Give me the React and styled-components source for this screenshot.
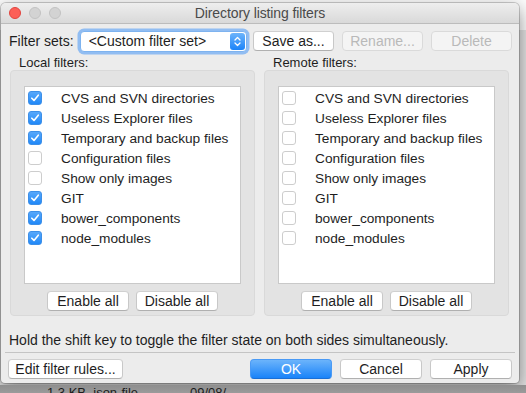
import React from "react";
import styled, { createGlobalStyle, css } from "styled-components";

const GlobalStyle = createGlobalStyle`
  html, body {
    margin: 0;
    padding: 0;
    background: #dcdcdc;
  }
  body {
    font-family: "Liberation Sans", Arial, sans-serif;
    -webkit-font-smoothing: antialiased;
  }
`;

const Page = styled.div`
  width: 526px;
  height: 393px;
  overflow: hidden;
  display: flex;
  flex-direction: column;
  background: linear-gradient(to bottom, #fbfbfb 0, #fbfbfb 30px, #e2e2e2 30px);
  padding: 3px 0 0 1px;
  box-sizing: border-box;
`;

const Window = styled.div`
  width: 518px;
  height: 380px;
  flex-shrink: 0;
  display: flex;
  flex-direction: column;
  background: #ececec;
  border-radius: 5px 5px 4px 4px;
  box-shadow: 0 0 0 1px rgba(0, 0, 0, 0.18), 0 6px 18px rgba(0, 0, 0, 0.45);
  overflow: hidden;
`;

const TitleBar = styled.div`
  height: 20px;
  display: grid;
  grid-template-columns: 1fr auto 1fr;
  align-items: center;
  background: linear-gradient(to bottom, #eeeeee, #d9d9d9);
  border-bottom: 1px solid #bcbcbc;
`;

const Lights = styled.div`
  display: flex;
  gap: 8px;
  padding-left: 8px;
`;

const Light = styled.span`
  width: 12px;
  height: 12px;
  border-radius: 50%;
  box-sizing: border-box;
  background: ${(p) => (p.$red ? "#fc5f57" : "#d3d3d3")};
  border: 1px solid ${(p) => (p.$red ? "#e0443e" : "#c2c2c2")};
`;

const Title = styled.div`
  font-size: 14px;
  color: #4a4a4a;
  letter-spacing: -0.1px;
`;

const Body = styled.div`
  flex: 1;
  display: flex;
  flex-direction: column;
  padding: 0 7px 0 7px;
`;

const Toolbar = styled.div`
  display: flex;
  align-items: center;
  margin-top: 5px;
  height: 24px;
`;

const Label = styled.span`
  font-size: 14px;
  color: #1e1e1e;
  width: 71px;
  padding-left: 1px;
  white-space: nowrap;
`;

const Select = styled.div`
  width: 168px;
  height: 21px;
  box-sizing: border-box;
  display: flex;
  align-items: center;
  justify-content: space-between;
  background: #fff;
  border: 1px solid #7eb3ef;
  border-radius: 4px;
  box-shadow: 0 0 0 2.5px rgba(97, 164, 246, 0.65);
  padding: 0 1px 0 8px;
  font-size: 14px;
  color: #1e1e1e;
  margin-right: 6px;
`;

const Stepper = styled.span`
  width: 15px;
  height: 17px;
  border-radius: 3px;
  background: linear-gradient(to bottom, #6db4fb, #1a83f9);
  display: flex;
  align-items: center;
  justify-content: center;
`;

const Button = styled.div`
  height: 20px;
  width: ${(p) => p.$w || 81}px;
  box-sizing: border-box;
  display: flex;
  align-items: center;
  justify-content: center;
  font-size: 14px;
  border-radius: 4px;
  color: #1e1e1e;
  background: #fff;
  border: 1px solid #c8c8c8;
  border-top-color: #d0d0d0;
  border-bottom-color: #b0b0b0;
  white-space: nowrap;
  ${(p) =>
    p.$disabled &&
    css`
      color: #b9b9b9;
      background: #f4f4f4;
      border-color: #dadada;
    `}
  ${(p) =>
    p.$primary &&
    css`
      color: #fff;
      background: linear-gradient(to bottom, #6cb4fb, #1a83f9);
      border-color: #4a9af5;
      border-bottom-color: #1a6fd6;
    `}
`;

const ButtonGroup = styled.div`
  display: flex;
  gap: ${(p) => p.$gap || 8}px;
  align-items: center;
`;

const Panels = styled.div`
  display: grid;
  grid-template-columns: 245px 245px;
  gap: 9px;
  padding-left: 2px;
  margin-top: 3px;
`;

const Panel = styled.div`
  display: flex;
  flex-direction: column;
`;

const PanelLabel = styled.div`
  font-size: 13px;
  line-height: 14px;
  color: #1e1e1e;
  padding-left: 9px;
  height: 14px;
`;

const GroupBox = styled.div`
  height: 246px;
  box-sizing: border-box;
  display: flex;
  flex-direction: column;
  align-items: center;
  background: #e3e3e3;
  border: 1px solid #d9d9d9;
  border-radius: 4px;
  padding: 15px 13px 0;
`;

const List = styled.div`
  width: 100%;
  height: 198px;
  box-sizing: border-box;
  background: #fff;
  border: 1px solid #c9c9c9;
  padding: 1px 3px;
  margin-bottom: 7px;
`;

const Row = styled.div`
  display: flex;
  align-items: center;
  height: 20px;
  font-size: 13.7px;
  color: #1e1e1e;
  gap: 19px;
  white-space: nowrap;
`;

const Box = styled.span`
  width: 14px;
  height: 14px;
  flex-shrink: 0;
  box-sizing: border-box;
  border-radius: 3px;
  display: flex;
  align-items: center;
  justify-content: center;
  ${(p) =>
    p.$on
      ? css`
          background: linear-gradient(to bottom, #58a8fa, #2189f8);
          border: 1px solid #3d8fe8;
        `
      : css`
          background: #fff;
          border: 1px solid #cdcdcd;
        `}
`;

const Hint = styled.div`
  font-size: 14px;
  color: #1e1e1e;
  margin-top: 17px;
  line-height: 14px;
  padding-left: 1px;
  white-space: nowrap;
`;

const Separator = styled.div`
  height: 1px;
  background: #c4c4c4;
  margin: 5px -3px 0;
`;

const Footer = styled.div`
  display: flex;
  justify-content: space-between;
  align-items: center;
  margin-top: 6px;
`;

const Backdrop = styled.div`
  flex: 1;
  display: flex;
  align-items: flex-start;
  gap: 52px;
  padding: 1px 0 0 47px;
  font-size: 13px;
  line-height: 14px;
  color: #1c1c1c;
  background: linear-gradient(to bottom, #8e8e8e, #a6a6a6);
  margin-left: -1px;
  margin-top: 2px;
`;

const Check = () => (
  <svg width="10" height="10" viewBox="0 0 10 10">
    <path d="M1.8 5.2 L4 7.4 L8.3 2.2" fill="none" stroke="#fff" strokeWidth="1.6" strokeLinecap="round" strokeLinejoin="round" />
  </svg>
);

const Arrows = () => (
  <svg width="9" height="13" viewBox="0 0 9 13">
    <path d="M2 5 L4.5 2.5 L7 5 M2 8 L4.5 10.5 L7 8" fill="none" stroke="#fff" strokeWidth="1.3" strokeLinecap="round" strokeLinejoin="round" />
  </svg>
);

const filters = [
  "CVS and SVN directories",
  "Useless Explorer files",
  "Temporary and backup files",
  "Configuration files",
  "Show only images",
  "GIT",
  "bower_components",
  "node_modules",
];

const localOn = [true, true, true, false, false, true, true, true];

const FilterPanel = ({ title, enabled }) => (
  <Panel>
    <PanelLabel>{title}</PanelLabel>
    <GroupBox>
      <List>
        {filters.map((f, i) => (
          <Row key={f}>
            <Box $on={enabled[i]}>{enabled[i] && <Check />}</Box>
            {f}
          </Row>
        ))}
      </List>
      <ButtonGroup $gap={7}>
        <Button $w={82}>Enable all</Button>
        <Button $w={82}>Disable all</Button>
      </ButtonGroup>
    </GroupBox>
  </Panel>
);

export default function App() {
  return (
    <>
      <GlobalStyle />
      <Page>
        <Window>
          <TitleBar>
            <Lights>
              <Light $red />
              <Light />
              <Light />
            </Lights>
            <Title>Directory listing filters</Title>
            <span />
          </TitleBar>
          <Body>
            <Toolbar>
              <Label>Filter sets:</Label>
              <Select>
                &lt;Custom filter set&gt;
                <Stepper>
                  <Arrows />
                </Stepper>
              </Select>
              <ButtonGroup>
                <Button>Save as...</Button>
                <Button $disabled>Rename...</Button>
                <Button $disabled>Delete</Button>
              </ButtonGroup>
            </Toolbar>
            <Panels>
              <FilterPanel title="Local filters:" enabled={localOn} />
              <FilterPanel title="Remote filters:" enabled={filters.map(() => false)} />
            </Panels>
            <Hint>Hold the shift key to toggle the filter state on both sides simultaneously.</Hint>
            <Separator />
            <Footer>
              <Button $w={115}>Edit filter rules...</Button>
              <ButtonGroup>
                <Button $primary $w={82}>OK</Button>
                <Button $w={82}>Cancel</Button>
                <Button $w={82}>Apply</Button>
              </ButtonGroup>
            </Footer>
          </Body>
        </Window>
        <Backdrop>
          <span>1.3 KB&nbsp;&nbsp;json-file</span>
          <span>09/08/</span>
        </Backdrop>
      </Page>
    </>
  );
}
